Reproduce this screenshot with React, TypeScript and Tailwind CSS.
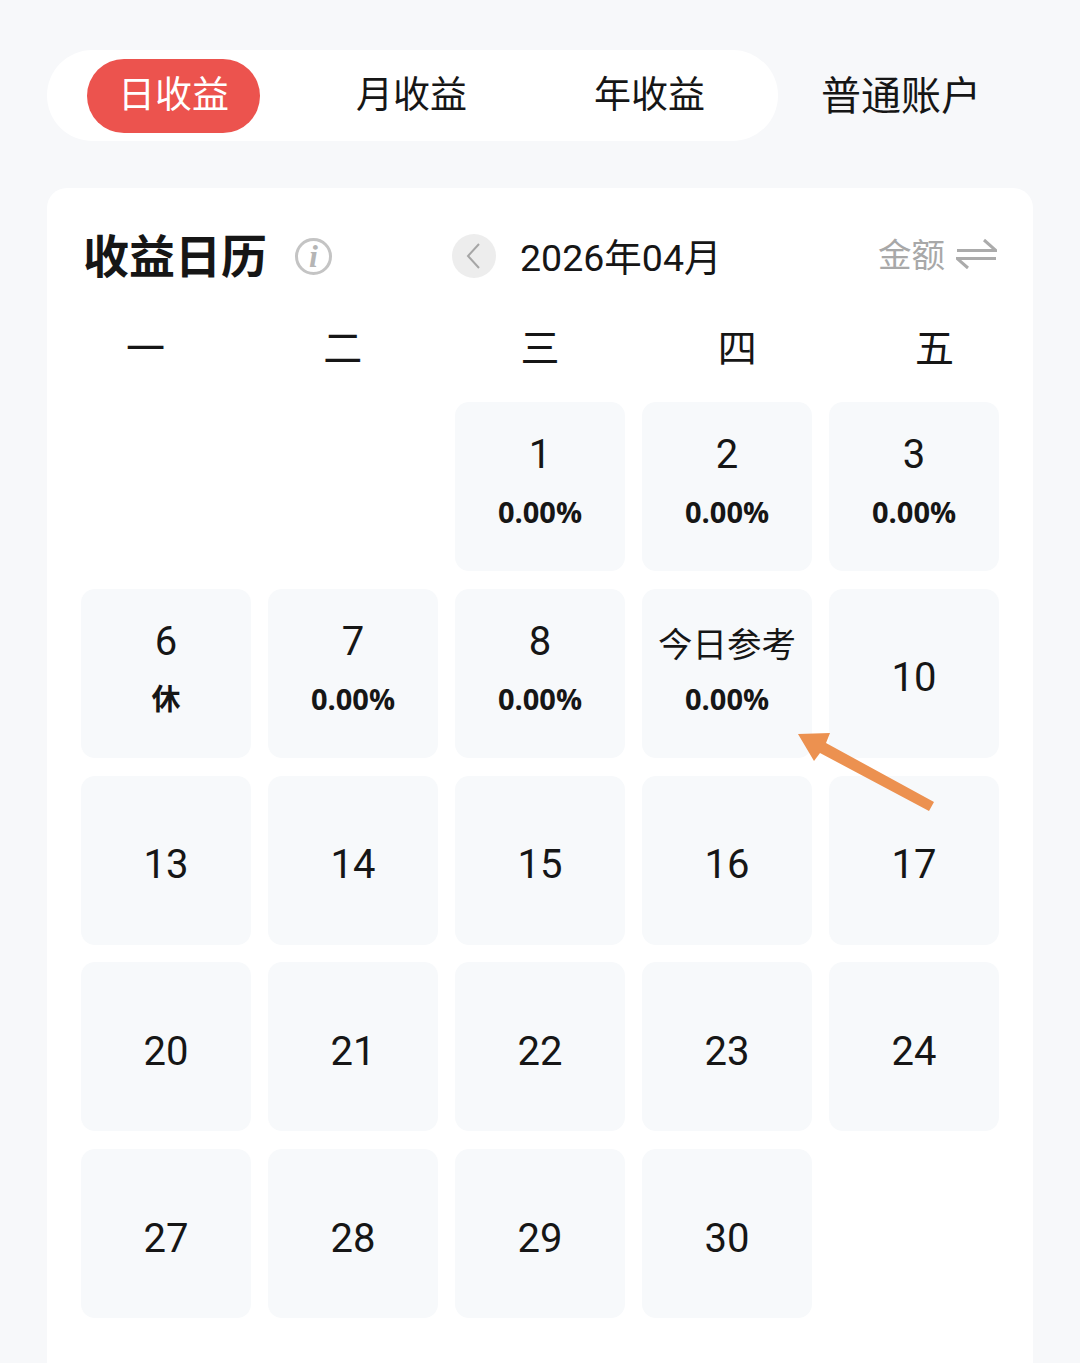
const font = { fontFamily: '"Noto Sans CJK SC", sans-serif' };

const weekdays = ["一", "二", "三", "四", "五"];

type Day = { n?: string; sub?: string };

const days: Day[] = [
  {},
  {},
  { n: "1", sub: "0.00%" },
  { n: "2", sub: "0.00%" },
  { n: "3", sub: "0.00%" },
  { n: "6", sub: "休" },
  { n: "7", sub: "0.00%" },
  { n: "8", sub: "0.00%" },
  { n: "今日参考", sub: "0.00%" },
  { n: "10" },
  { n: "13" },
  { n: "14" },
  { n: "15" },
  { n: "16" },
  { n: "17" },
  { n: "20" },
  { n: "21" },
  { n: "22" },
  { n: "23" },
  { n: "24" },
  { n: "27" },
  { n: "28" },
  { n: "29" },
  { n: "30" },
  {},
];

const DayCell = ({ day }: { day: Day }) => {
  if (!day.n) return <div />;
  const isToday = day.n === "今日参考";
  return (
    <div className="flex flex-col items-center rounded-[14px] bg-[#f7f9fb] text-[#161616]">
      {day.sub ? (
        <>
          <div
            className={`mt-[30px] h-[46px] leading-[46px] whitespace-nowrap ${
              isToday ? "text-[34.5px] font-['Noto_Sans_CJK_SC',sans-serif]" : "text-[40px] font-['Roboto',sans-serif]"
            }`}
          >
            {day.n}
          </div>
          <div className="mt-[17px] h-[34px] text-[29px] leading-[34px] font-bold font-['Open_Sans','Noto_Sans_CJK_SC',sans-serif]">
            {day.sub}
          </div>
        </>
      ) : (
        <div className="flex flex-1 items-center pt-[10px] text-[40px] font-['Roboto',sans-serif]">{day.n}</div>
      )}
    </div>
  );
};

export default function App() {
  return (
    <div className="relative h-[1363px] w-[1080px] overflow-hidden bg-[#f7f8fa] pt-[50px] text-[#161616]" style={font}>
      <div className="flex items-center pl-[47px]">
        <div className="flex h-[91px] w-[731px] items-center gap-[65px] rounded-[46px] bg-white pl-[40px] text-[37px]">
          <div className="flex h-[74px] w-[173px] items-center justify-center rounded-[37px] bg-[#ec534e] pb-[5px] text-white">
            日收益
          </div>
          <div className="flex w-[173px] justify-center pb-[5px]">月收益</div>
          <div className="flex w-[173px] justify-center pb-[5px]">年收益</div>
        </div>
        <div className="mb-[6px] ml-[43px] text-[40px] leading-none whitespace-nowrap">普通账户</div>
      </div>

      <div className="mt-[47px] ml-[47px] h-[1300px] w-[986px] rounded-t-[20px] bg-white">
        <div className="flex h-[136px] items-center pl-[36px]">
          <h1 className="mb-[6px] w-[183px] text-[46px] leading-none font-bold whitespace-nowrap">收益日历</h1>
          <div className="ml-[29px] flex h-[37px] w-[37px] items-center justify-center rounded-full border-[3px] border-[#c4c4c4] text-[32px] leading-none font-bold text-[#b5b5b5] italic font-['Liberation_Serif',serif]">
            i
          </div>
          <div className="ml-[120px] flex h-[44px] w-[44px] items-center justify-center rounded-full bg-[#ededed]">
            <svg width="16" height="28" viewBox="0 0 16 28" fill="none" stroke="#a6a6a6" strokeWidth="2">
              <path d="M13 2 2 14l11 12" />
            </svg>
          </div>
          <div className="mt-[6px] ml-[24px] w-[200px] text-[37.5px] leading-none whitespace-nowrap font-['Roboto','Noto_Sans_CJK_SC',sans-serif]">
            2026年04月
          </div>
          <div className="mb-[6px] ml-[158px] text-[33.5px] leading-none whitespace-nowrap text-[#a8a8a8]">金额</div>
          <svg className="ml-[11px] -translate-y-[2px]" width="41" height="32" viewBox="0 0 41 32" fill="none" stroke="#ababab" strokeWidth="3">
            <path d="M1 12.5h39L28 2" />
            <path d="M40 20.5H1L12 30" />
          </svg>
        </div>

        <div className="grid h-[78px] grid-cols-5">
          {weekdays.map((w) => (
            <div key={w} className="flex items-start justify-center text-[39px] leading-[43px]">
              {w}
            </div>
          ))}
        </div>

        <div className="mx-[34px] grid grid-cols-5 gap-x-[17.2px] gap-y-[17.8px]" style={{ gridAutoRows: "169px" }}>
          {days.map((d, i) => (
            <DayCell key={i} day={d} />
          ))}
        </div>
      </div>

      <svg className="absolute top-[725px] left-[790px]" width="150" height="95" viewBox="790 725 150 95">
        <polygon points="798,734 830,733 826,743 934,802 929,811 820,753 814,761" fill="#ec9150" />
      </svg>
    </div>
  );
}
